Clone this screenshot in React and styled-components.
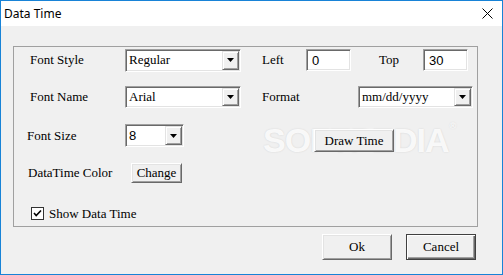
import React from 'react'
import styled, { createGlobalStyle } from 'styled-components'

const GlobalStyle = createGlobalStyle`
  html, body {
    margin: 0;
    padding: 0;
    background: #fff;
  }
  * {
    box-sizing: border-box;
  }
`;

const Window = styled.div`
  position: relative;
  width: 503px;
  height: 275px;
  border: 1px solid #1883d7;
  display: flex;
  flex-direction: column;
  background: #f0f0f0;
  overflow: hidden;
`;

const TitleBar = styled.div`
  height: 25px;
  flex-shrink: 0;
  background: #fff;
  display: flex;
  align-items: center;
  justify-content: space-between;
  padding: 0 9px 0 3px;
  font-family: "Segoe UI", "Noto Sans", sans-serif;
  font-size: 12px;
  color: #000;
`;

const Client = styled.div`
  flex: 1;
  display: flex;
  flex-direction: column;
  padding: 20px 0 0 12px;
`;

const Group = styled.div`
  width: 465px;
  height: 181px;
  border: 1px solid #a0a0a0;
  padding: 1px 0 0 0;
  display: flex;
  flex-direction: column;
`;

const Row = styled.div`
  display: flex;
  align-items: center;
  height: ${({ $h }) => $h}px;
  margin-top: ${({ $mt }) => $mt || 0}px;
  padding-left: ${({ $pl }) => $pl}px;
`;

const Label = styled.span`
  flex-shrink: 0;
  width: ${({ $w }) => ($w ? `${$w}px` : 'auto')};
  margin-left: ${({ $ml }) => $ml || 0}px;
  font-family: "Liberation Serif", "Times New Roman", serif;
  font-size: 13px;
  color: #000;
  white-space: nowrap;
`;

const Sunken = styled.div`
  flex-shrink: 0;
  display: flex;
  align-items: center;
  width: ${({ $w }) => $w}px;
  height: ${({ $h }) => $h || 23}px;
  background: #fff;
  border: 1px solid;
  border-color: #a0a0a0 #fff #fff #a0a0a0;
  box-shadow: inset 1px 1px 0 #696969, inset -1px -1px 0 #e3e3e3;
  padding: 1px;
`;

const FieldText = styled.span`
  flex: 1;
  padding-left: ${({ $pl }) => $pl || 2}px;
  font-family: ${({ $sans }) =>
    $sans ? '"Liberation Sans", Arial, sans-serif' : '"Liberation Serif", "Times New Roman", serif'};
  font-size: 13px;
  color: #000;
  white-space: nowrap;
  overflow: hidden;
`;

const ArrowButton = styled.div`
  width: 17px;
  height: 100%;
  flex-shrink: 0;
  display: flex;
  align-items: center;
  justify-content: center;
  background: #f0f0f0;
  border: 1px solid;
  border-color: #e3e3e3 #696969 #696969 #e3e3e3;
  box-shadow: inset 1px 1px 0 #fff, inset -1px -1px 0 #a0a0a0;
`;

const Button = styled.button`
  position: relative;
  z-index: 1;
  flex-shrink: 0;
  width: ${({ $w }) => $w}px;
  height: ${({ $h }) => $h}px;
  margin: ${({ $mt }) => $mt || 0}px 0 0 ${({ $ml }) => $ml || 0}px;
  padding: 0;
  background: #f0f0f0;
  border: 1px solid;
  border-color: ${({ $default }) =>
    $default ? '#404040' : '#fff #696969 #696969 #fff'};
  box-shadow: ${({ $default }) =>
    $default
      ? 'inset 1px 1px 0 #fff, inset -1px -1px 0 #696969, inset -2px -2px 0 #a0a0a0'
      : 'inset 1px 1px 0 #e3e3e3, inset -1px -1px 0 #a0a0a0'};
  font-family: "Liberation Serif", "Times New Roman", serif;
  font-size: 13px;
  color: #000;
  cursor: default;
`;

const CheckRow = styled.label`
  display: flex;
  align-items: center;
  gap: 5px;
`;

const CheckBox = styled.span`
  width: 13px;
  height: 13px;
  flex-shrink: 0;
  display: flex;
  align-items: center;
  justify-content: center;
  background: #fff;
  border: 1px solid #333;
`;

const Footer = styled.div`
  display: flex;
  justify-content: flex-end;
  gap: 14px;
  margin-top: 7px;
  padding-right: 26px;
`;

const Watermark = styled.div`
  position: absolute;
  z-index: 0;
  left: 262px;
  top: 120px;
  font-family: "Liberation Sans", Arial, sans-serif;
  font-weight: 700;
  font-size: 34px;
  letter-spacing: -1px;
  color: rgba(255, 255, 255, 0.85);
  text-shadow: 0 0 2px rgba(0, 0, 0, 0.12);
  pointer-events: none;
  sup {
    font-size: 9px;
    vertical-align: top;
    margin-left: 1px;
  }
`;

const DownArrow = () => (
  <svg width="7" height="4" viewBox="0 0 7 4">
    <polygon points="0,0 7,0 3.5,4" fill="#000" />
  </svg>
);

const Combo = ({ w, h, value, sans }) => (
  <Sunken $w={w} $h={h}>
    <FieldText $sans={sans}>{value}</FieldText>
    <ArrowButton>
      <DownArrow />
    </ArrowButton>
  </Sunken>
);

const TextBox = ({ value }) => (
  <Sunken $w={45} $h={22}>
    <FieldText $sans $pl={4}>{value}</FieldText>
  </Sunken>
);

const CloseIcon = () => (
  <svg width="11" height="11" viewBox="0 0 11 11">
    <path d="M0.5 0.5 L10.5 10.5 M10.5 0.5 L0.5 10.5" stroke="#000" strokeWidth="1" />
  </svg>
);

const App = () => {
  return (
    <>
      <GlobalStyle />
      <Window>
        <Watermark>
          SOFTPEDIA<sup>®</sup>
        </Watermark>
        <TitleBar>
          <span>Data Time</span>
          <CloseIcon />
        </TitleBar>
        <Client>
          <Group>
            <Row $h={24} $pl={16}>
              <Label $w={95}>Font Style</Label>
              <Combo w={116} value="Regular" />
              <Label $w={44} $ml={21}>Left</Label>
              <TextBox value="0" />
              <Label $w={44} $ml={28}>Top</Label>
              <TextBox value="30" />
            </Row>
            <Row $h={22} $mt={14} $pl={16}>
              <Label $w={95}>Font Name</Label>
              <Combo w={116} h={22} value="Arial" />
              <Label $w={96} $ml={21}>Format</Label>
              <Combo w={115} h={22} value="mm/dd/yyyy" />
            </Row>
            <Row $h={23} $mt={16} $pl={13}>
              <Label $w={98}>Font Size</Label>
              <Combo w={59} value="8" sans />
              <Button $w={80} $h={23} $ml={130} $mt={10}>Draw Time</Button>
            </Row>
            <Row $h={20} $mt={16} $pl={14}>
              <Label $w={103}>DataTime Color</Label>
              <Button $w={51} $h={20}>Change</Button>
            </Row>
            <Row $h={13} $mt={24} $pl={17}>
              <CheckRow>
                <CheckBox>
                  <svg width="11" height="11" viewBox="0 0 11 11">
                    <path d="M2 5 L4.2 7.5 L9 2.5" fill="none" stroke="#000" strokeWidth="1.6" />
                  </svg>
                </CheckBox>
                <Label>Show Data Time</Label>
              </CheckRow>
            </Row>
          </Group>
          <Footer>
            <Button $w={70} $h={26}>Ok</Button>
            <Button $w={70} $h={26} $default>Cancel</Button>
          </Footer>
        </Client>
      </Window>
    </>
  )
}

export default App
